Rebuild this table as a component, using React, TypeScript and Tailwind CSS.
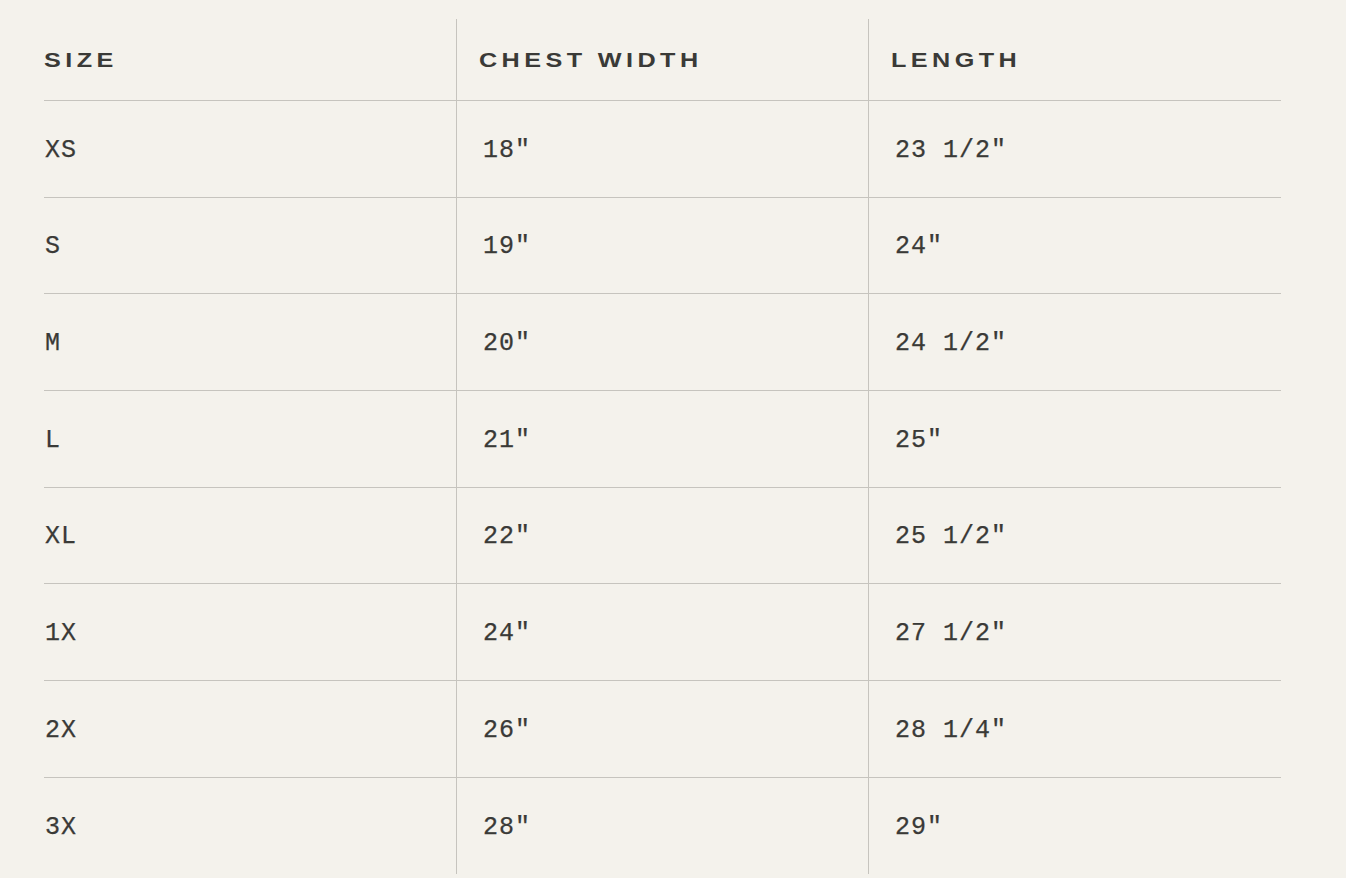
const rows = [
  ["XS", '18"', '23 1/2"'],
  ["S", '19"', '24"'],
  ["M", '20"', '24 1/2"'],
  ["L", '21"', '25"'],
  ["XL", '22"', '25 1/2"'],
  ["1X", '24"', '27 1/2"'],
  ["2X", '26"', '28 1/4"'],
  ["3X", '28"', '29"'],
];

const headers = ["Size", "Chest Width", "Length"];

export default function App() {
  return (
    <div className="min-h-[878px] w-full bg-[#f4f2ec] pl-[44px] pt-[19px] text-[#3a3a37]">
      <div className="grid w-[1237px] grid-cols-[412px_412px_413px]">
        {/* header */}
        {headers.map((h, i) => (
          <div
            key={h}
            className={`flex h-[82px] items-center border-b border-[#c6c4be] ${i > 0 ? "border-l pl-[22px]" : ""}`}
          >
            <span className="inline-block origin-left scale-x-[1.26] font-['Liberation_Sans',Arial,sans-serif] text-[20px] font-bold uppercase leading-none tracking-[3.5px]">
              {h}
            </span>
          </div>
        ))}

        {/* body */}
        {rows.map((r, ri) =>
          r.map((cell, ci) => (
            <div
              key={`${ri}-${ci}`}
              className={`flex h-[96.67px] items-center pt-[3px] border-[#c6c4be] ${ri < rows.length - 1 ? "border-b" : ""} ${ci > 0 ? "border-l pl-[26px]" : "pl-px"}`}
            >
              <span className="font-['Liberation_Mono','DejaVu_Sans_Mono',monospace] text-[25px] leading-none tracking-[1px] [-webkit-text-stroke:0.25px_#3a3a37]">
                {cell}
              </span>
            </div>
          ))
        )}
      </div>
    </div>
  );
}
